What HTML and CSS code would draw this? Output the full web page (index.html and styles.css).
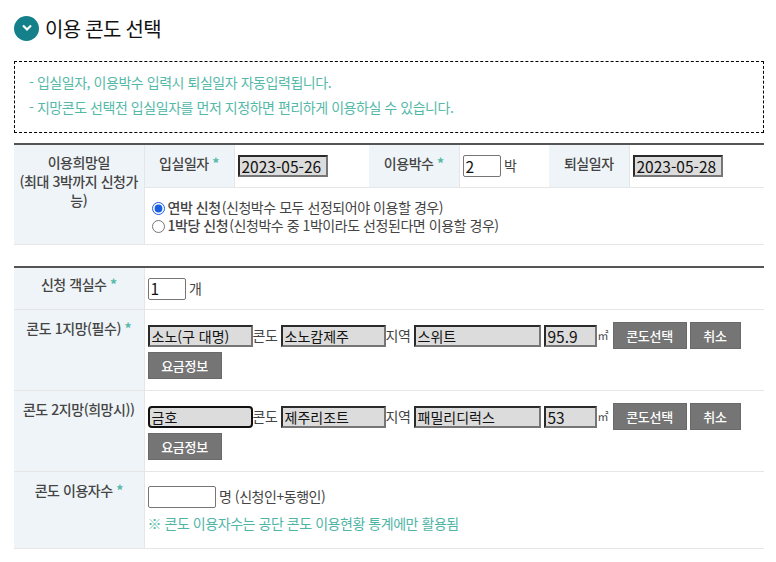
FILE: index.html
```html
<!DOCTYPE html>
<html lang="ko">
<head>
  <meta charset="UTF-8" />
  <title>이용 콘도 선택</title>
  <link rel="stylesheet" href="styles.css">
</head>
<body>
  <h2 class="title">
    <span class="title-icon">
      <svg width="12" height="8" viewBox="0 0 12 8"><path d="M2 1.5 L6 5.5 L10 1.5" fill="none" stroke="#fff" stroke-width="2.2"/></svg>
    </span>
    이용 콘도 선택
  </h2>

  <div class="notice">
    <p>- 입실일자, 이용박수 입력시 퇴실일자 자동입력됩니다.</p>
    <p>- 지망콘도 선택전 입실일자를 먼저 지정하면 편리하게 이용하실 수 있습니다.</p>
  </div>

  <table class="form-table first">
    <colgroup>
      <col class="c-head" /><col class="c-sub" /><col class="c-date" /><col class="c-sub" /><col class="c-nights" /><col class="c-out" /><col />
    </colgroup>
    <tr class="row-dates">
      <th rowspan="2" class="th-wish">이용희망일<br />(최대 3박까지 신청가능)</th>
      <th>입실일자 <em>*</em></th>
      <td><input type="text" class="ro digits w-date" value="2023-05-26" readonly /></td>
      <th>이용박수 <em>*</em></th>
      <td><input type="text" class="num digits w-small" value="2" /> 박</td>
      <th>퇴실일자</th>
      <td><input type="text" class="ro digits w-date" value="2023-05-28" readonly /></td>
    </tr>
    <tr class="row-radio">
      <td colspan="6" class="radios">
        <label><input type="radio" name="stay" checked /><b>연박 신청</b> (신청박수 모두 선정되어야 이용할 경우)</label>
        <label><input type="radio" name="stay" /><b>1박당 신청</b> (신청박수 중 1박이라도 선정된다면 이용할 경우)</label>
      </td>
    </tr>
  </table>

  <table class="form-table second">
    <colgroup><col class="c-head" /><col /></colgroup>
    <tr class="row-rooms">
      <th>신청 객실수 <em>*</em></th>
      <td><input type="text" class="num digits w-small" value="1" /> 개</td>
    </tr>
    <tr class="row-condo">
      <th>콘도 1지망(필수) <em>*</em></th>
      <td>
        <div class="condo-line">
          <input type="text" class="ro w-brand" value="소노(구 대명)" readonly /><span class="tag">콘도</span>
          <input type="text" class="ro w-brand" value="소노캄제주" readonly /><span class="tag">지역</span>
          <input type="text" class="ro w-type" value="스위트" readonly />
          <input type="text" class="ro digits w-area" value="95.9" readonly /><span class="unit">㎡</span>
          <button type="button" class="btn w-pick">콘도선택</button>
          <button type="button" class="btn w-cancel">취소</button>
        </div>
        <button type="button" class="btn w-fee">요금정보</button>
      </td>
    </tr>
    <tr class="row-condo">
      <th>콘도 2지망(희망시))</th>
      <td>
        <div class="condo-line">
          <input type="text" class="ro w-brand focused" value="금호" readonly /><span class="tag">콘도</span>
          <input type="text" class="ro w-brand" value="제주리조트" readonly /><span class="tag">지역</span>
          <input type="text" class="ro w-type" value="패밀리디럭스" readonly />
          <input type="text" class="ro digits w-area" value="53" readonly /><span class="unit">㎡</span>
          <button type="button" class="btn w-pick">콘도선택</button>
          <button type="button" class="btn w-cancel">취소</button>
        </div>
        <button type="button" class="btn w-fee">요금정보</button>
      </td>
    </tr>
    <tr class="row-users">
      <th>콘도 이용자수 <em>*</em></th>
      <td>
        <input type="text" class="num w-users" /> 명 (신청인+동행인)
        <p class="hint">※ 콘도 이용자수는 공단 콘도 이용현황 통계에만 활용됨</p>
      </td>
    </tr>
  </table>
</body>
</html>
```

FILE: styles.css
```css
* {
  box-sizing: border-box;
}
body {
  margin: 0;
  padding: 0 12px 0 14px;
  background-color: #fff;
  color: #444;
  font-family: "Noto Sans CJK KR", "Noto Sans", sans-serif;
  font-size: 14px;
  letter-spacing: -0.45px;
}
.title {
  display: flex;
  align-items: center;
  gap: 6px;
  height: 24px;
  margin: 16px 0 21px;
  color: #111;
  font-size: 20px;
  font-weight: 400;
  letter-spacing: -0.7px;
}
.title-icon {
  display: flex;
  align-items: center;
  justify-content: center;
  width: 25px;
  height: 25px;
  border-radius: 50%;
  background-color: #14808a;
}
.notice {
  height: 72px;
  padding: 11px 14px;
  border: 1px dashed #000;
  margin-bottom: 10px;
  color: #55b9a8;
}
.notice p {
  margin: 0 0 6px;
  line-height: 19px;
}
.form-table {
  width: 100%;
  table-layout: fixed;
  border-collapse: collapse;
  border-top: 2px solid #555;
}
.first {
  margin-bottom: 21px;
}
.form-table th {
  padding: 9px 4px 5px;
  border-bottom: 1px solid #e6e6e6;
  border-right: 1px solid #e6e6e6;
  background-color: #eff4f8;
  color: #444;
  font-size: 14px;
  font-weight: 500;
  line-height: 19px;
  text-align: center;
  vertical-align: top;
}
.form-table .th-wish {
  padding-top: 8px;
}
.form-table .row-rooms th {
  padding-top: 7px;
}
.form-table td {
  padding: 0 3px;
  border-bottom: 1px solid #e6e6e6;
  vertical-align: top;
}
.form-table em {
  color: #55b9a8;
  font-style: normal;
  font-weight: 700;
}
.c-head {
  width: 130px;
}
.c-sub {
  width: 90px;
}
.c-date {
  width: 135px;
}
.c-nights {
  width: 90px;
}
.c-out {
  width: 80px;
}
.row-dates {
  height: 43px;
}
.row-dates td {
  padding-top: 10px;
}
.row-radio {
  height: 57px;
}
.radios {
  padding-top: 10px !important;
}
.radios label {
  display: flex;
  align-items: center;
  height: 18px;
  line-height: 18px;
}
.radios input {
  width: 13px;
  height: 13px;
  margin: 3px 3px 0 4px;
  accent-color: #1a5fe0;
}
.radios b {
  font-weight: 500;
  margin-right: 1px;
}
input[type="text"] {
  height: 22px;
  padding: 0 2px 1px;
  color: #111;
  font-family: "Noto Sans CJK KR", sans-serif;
  font-size: 14px;
  letter-spacing: 0;
  vertical-align: top;
}
input.digits {
  font-size: 15.5px;
}
.ro {
  border: 2px solid #767676;
  border-top-color: #2b2b2b;
  border-left-color: #2b2b2b;
  background-color: #dcdcdc;
}
.focused {
  border: 2px solid #111;
  border-radius: 4px;
}
.num {
  border: 1px solid #767676;
  border-radius: 2px;
  background-color: #fff;
}
.w-date {
  width: 90px;
}
.w-small {
  width: 38px;
}
.w-brand {
  width: 105px;
}
.w-type {
  width: 127px;
}
.w-area {
  width: 53px;
}
.w-users {
  width: 68px;
}
.row-rooms {
  height: 43px;
}
.row-rooms td {
  padding-top: 10px;
}
.row-condo {
  height: 81px;
}
.row-condo td {
  padding-top: 12px;
}
.condo-line {
  display: flex;
  gap: 0;
  height: 30px;
  line-height: 20px;
}
.condo-line input {
  margin-top: 3px;
}
.tag {
  width: 28px;
  margin-top: 3px;
  flex: none;
}
.condo-line .w-type,
.condo-line .w-area {
  margin-right: 3px;
}
.condo-line .w-area {
  margin-right: 1px;
}
.unit {
  width: 15px;
  margin-top: 3px;
  font-size: 11px;
  flex: none;
}
.btn {
  height: 27px;
  border: 1px solid #6a6a6a;
  background-color: #757575;
  color: #fff;
  font-family: "Noto Sans CJK KR", sans-serif;
  font-size: 13px;
  font-weight: 500;
  letter-spacing: -0.3px;
}
.w-pick {
  width: 74px;
  margin-right: 3px;
}
.w-cancel {
  width: 51px;
}
.w-fee {
  display: block;
  width: 74px;
  margin-top: 0;
}
.row-users {
  height: 77px;
}
.row-users td {
  padding-top: 14px;
}
.hint {
  margin: 5px 0 0;
  color: #4fb5a5;
  line-height: 20px;
}
```
